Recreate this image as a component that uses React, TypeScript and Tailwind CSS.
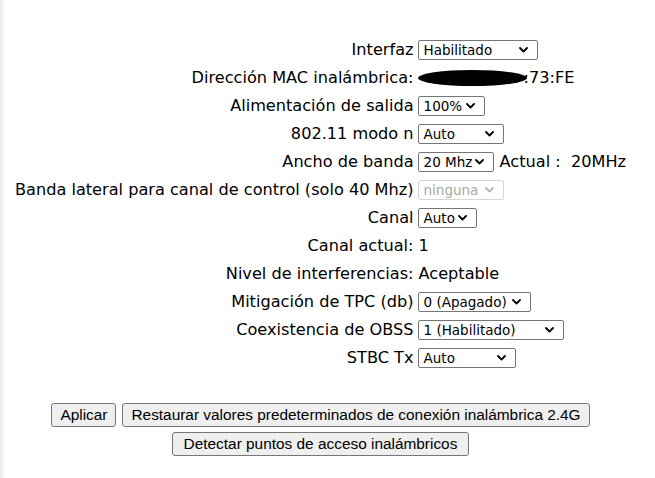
import React from "react";

const Chevron = ({ color = "#000" }: { color?: string }) => (
  <svg width="9" height="6" viewBox="0 0 9 6" className="shrink-0">
    <polyline points="1,1 4.5,4.5 8,1" fill="none" stroke={color} strokeWidth="1.8" strokeLinecap="round" strokeLinejoin="round" />
  </svg>
);

const Sel = ({ text, w, disabled = false }: { text: string; w: number; disabled?: boolean }) => (
  <div
    className={
      "inline-flex h-[20px] items-center justify-between rounded-[2px] border bg-white pl-[5px] pr-[9px] text-[13.5px] leading-none " +
      (disabled ? "border-[#d6d6d6] text-[#a8a8a8]" : "border-[#767676] text-black")
    }
    style={{ width: w }}
  >
    <span className="whitespace-nowrap pt-[1px]">{text}</span>
    <Chevron color={disabled ? "#b5b5b5" : "#000"} />
  </div>
);

const Btn = ({ children, wide = false }: { children: React.ReactNode; wide?: boolean }) => (
  <button
    className={
      "h-[24px] rounded-[3px] border border-[#767676] bg-[#efefef] text-[15.4px] leading-none text-black [font-family:'Liberation_Sans',Arial,sans-serif] " +
      (wide ? "px-[11px]" : "px-[8px]")
    }
  >
    {children}
  </button>
);

const rows: { label: string; value: React.ReactNode }[] = [
  { label: "Interfaz", value: <Sel text="Habilitado" w={120} /> },
  {
    label: "Dirección MAC inalámbrica:",
    value: (
      <span className="flex items-center">
        <span className="relative z-10 inline-block h-[16px] w-[109px] rounded-[50%] bg-black" />
        <span className="-ml-[3px]">:73:FE</span>
      </span>
    ),
  },
  { label: "Alimentación de salida", value: <Sel text="100%" w={67} /> },
  { label: "802.11 modo n", value: <Sel text="Auto" w={86} /> },
  {
    label: "Ancho de banda",
    value: (
      <span className="flex items-center">
        <Sel text="20 Mhz" w={76} />
        <span className="ml-[6px] whitespace-pre">Actual :  20MHz</span>
      </span>
    ),
  },
  { label: "Banda lateral para canal de control (solo 40 Mhz)", value: <Sel text="ninguna" w={86} disabled /> },
  { label: "Canal", value: <Sel text="Auto" w={59} /> },
  { label: "Canal actual:", value: <span className="pl-[1px]">1</span> },
  { label: "Nivel de interferencias:", value: <span className="pl-[1px]">Aceptable</span> },
  { label: "Mitigación de TPC (db)", value: <Sel text="0 (Apagado)" w={113} /> },
  { label: "Coexistencia de OBSS", value: <Sel text="1 (Habilitado)" w={146} /> },
  { label: "STBC Tx", value: <Sel text="Auto" w={98} /> },
];

export default function App() {
  return (
    <div className="flex min-h-[478px] w-[655px] bg-white text-black [font-family:'DejaVu_Sans',Verdana,sans-serif]">
      <div className="w-[6px] shrink-0 bg-linear-to-r from-[#e9e9e9] to-white" />
      <div className="flex w-[629px] flex-col items-center pt-[36px]">
        <div className="grid auto-rows-[28px] grid-cols-[auto_auto] items-center gap-x-[4px] text-[16.15px]">
          {rows.map((r, i) => (
            <React.Fragment key={i}>
              <div className="whitespace-nowrap text-right">{r.label}</div>
              <div className="flex items-center whitespace-nowrap">{r.value}</div>
            </React.Fragment>
          ))}
        </div>
        <div className="mt-[31px] flex gap-[6px]">
          <Btn>Aplicar</Btn>
          <Btn>Restaurar valores predeterminados de conexión inalámbrica 2.4G</Btn>
        </div>
        <div className="mt-[5px] flex">
          <Btn wide>Detectar puntos de acceso inalámbricos</Btn>
        </div>
      </div>
    </div>
  );
}
